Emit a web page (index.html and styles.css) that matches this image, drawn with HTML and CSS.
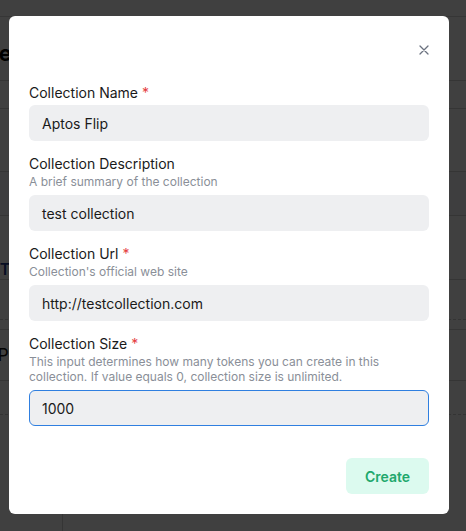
FILE: index.html
```html
<!DOCTYPE html>
<html>
<head>
<meta charset="utf-8">
<link rel="stylesheet" href="styles.css">
</head>
<body>
<div class="page">
  <div class="nav"></div>
  <div class="title-row"><h1 class="title">Tokens</h1></div>
  <div class="row r1"></div>
  <div class="row r2"></div>
  <div class="row r3"></div>
  <div class="row r4"><span class="tab">EDIT</span></div>
  <div class="row r5 dashed"></div>
  <div class="row r6"></div>
  <div class="row r7"><span class="cell">APT</span></div>
  <div class="row r8 dashed"></div>
  <div class="row r9"><span class="vline"></span></div>
</div>
<div class="overlay"></div>
<div class="modal-wrap">
  <div class="modal">
    <div class="modal-header">
      <button class="close" aria-label="Close">
        <svg width="10" height="10" viewBox="0 0 10 10"><path d="M1 1L9 9M9 1L1 9" stroke="#6b7280" stroke-width="1.3" stroke-linecap="round"/></svg>
      </button>
    </div>
    <form class="form">
      <div class="field">
        <label class="label label-tight">Collection Name <span class="req">*</span></label>
        <div class="input">Aptos Flip</div>
      </div>
      <div class="field">
        <label class="label">Collection Description</label>
        <div class="helper">A brief summary of the collection</div>
        <div class="input">test collection</div>
      </div>
      <div class="field">
        <label class="label">Collection Url <span class="req">*</span></label>
        <div class="helper">Collection's official web site</div>
        <div class="input">http://testcollection.com</div>
      </div>
      <div class="field">
        <label class="label">Collection Size <span class="req">*</span></label>
        <div class="helper">This input determines how many tokens you can create in this collection. If value equals 0, collection size is unlimited.</div>
        <div class="input focused">1000</div>
      </div>
    </form>
    <div class="footer">
      <button class="create">Create</button>
    </div>
  </div>
</div>
</body>
</html>
```
FILE: styles.css
```css
* { box-sizing: border-box; }
html, body { margin: 0; padding: 0; }
body {
  width: 466px;
  height: 531px;
  overflow: hidden;
  background: #ffffff;
  font-family: Inter, "Noto Sans", sans-serif;
  position: relative;
}
.page {
  display: flex;
  flex-direction: column;
  width: 466px;
  height: 531px;
}
.nav { height: 17px; border-bottom: 1px solid #d8d8d8; }
.title-row {
  height: 64px;
  border-bottom: 1px solid #d4d4d4;
  display: flex;
  align-items: flex-end;
  padding-bottom: 14px;
  overflow: hidden;
}
.title {
  margin: 0 0 0 -40px;
  font-size: 22px;
  line-height: 26px;
  font-weight: 700;
  color: #000;
  white-space: nowrap;
}
.row { border-bottom: 1px solid #d4d4d4; display: flex; align-items: center; overflow: hidden; }
.r1 { height: 28px; }
.r2 { height: 63px; }
.r3 { height: 44px; background: #f7f8fa; }
.r4 { height: 64px; align-items: flex-end; padding-bottom: 1px; }
.r5 { height: 40px; }
.r6 { height: 10px; }
.r7 { height: 51px; }
.r8 { height: 34px; }
.r9 { flex: 1; border-bottom: none; align-items: stretch; }
.dashed { border-bottom: 1px dashed #cfcfcf; }
.tab { margin-left: -26px; color: #1e3a8a; font-weight: 600; font-size: 16px; line-height: 18px; }
.cell { margin-left: -14px; color: #111; font-size: 17px; }
.vline { margin-left: 62px; width: 1px; background: #d4d4d4; }
.overlay {
  position: absolute;
  inset: 0;
  background: rgba(0, 0, 0, 0.75);
}
.modal-wrap {
  position: absolute;
  inset: 0;
  padding: 16px 17px 0 9px;
}
.modal {
  width: 440px;
  height: 498px;
  background: #fff;
  border-radius: 6px;
  padding: 20px;
  display: flex;
  flex-direction: column;
}
.modal-header {
  height: 46px;
  display: flex;
  justify-content: flex-end;
  align-items: flex-start;
}
.close {
  width: 24px;
  height: 24px;
  margin-top: 2px;
  margin-right: -7px;
  border: none;
  background: none;
  padding: 0;
  display: flex;
  align-items: center;
  justify-content: center;
}
.form { display: flex; flex-direction: column; gap: 12px; }
.field { display: flex; flex-direction: column; }
.label {
  font-size: 14px;
  line-height: 20px;
  font-weight: 400;
  color: #1a1a1a;
  margin-top: 1px;
  margin-bottom: 0;
}
.label-tight { margin-bottom: 2px; }
.req { color: #e53e3e; }
.helper {
  font-size: 12px;
  line-height: 15px;
  color: #8a8f98;
  margin-bottom: 6px;
}
.input {
  height: 36px;
  border-radius: 6px;
  background: #eeeff1;
  border: 1px solid transparent;
  padding: 0 12px;
  display: flex;
  align-items: center;
  font-size: 14px;
  color: #1a1a1a;
}
.input.focused { border-color: #2f7fe0; }
.footer {
  margin-top: 32px;
  display: flex;
  justify-content: flex-end;
}
.create {
  width: 83px;
  height: 36px;
  border: none;
  border-radius: 6px;
  background: #dcfaef;
  color: #20a86c;
  font-family: Inter, "Noto Sans", sans-serif;
  font-size: 14px;
  font-weight: 600;
}
```
